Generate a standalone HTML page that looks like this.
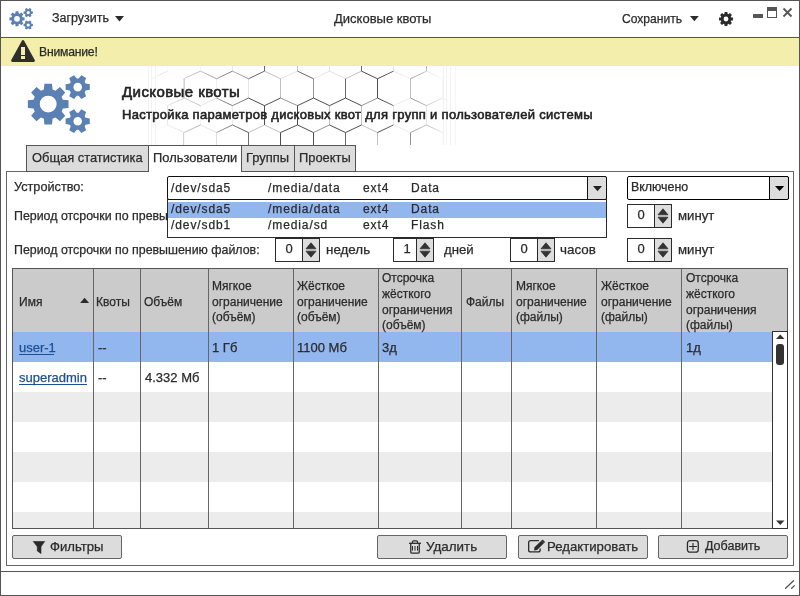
<!DOCTYPE html>
<html><head><meta charset="utf-8">
<style>
*{margin:0;padding:0;box-sizing:border-box}
html,body{width:800px;height:596px;overflow:hidden;background:#fff}
body{position:relative;font-family:"Liberation Sans",sans-serif;font-size:12px;color:#2b2b2b}
.a{position:absolute}
.t{position:absolute;white-space:nowrap;line-height:1;-webkit-font-smoothing:antialiased;will-change:transform;-webkit-text-stroke:0.25px currentColor}
</style></head><body>

<svg class="a" style="left:0;top:0" width="800" height="596">
<defs>
<linearGradient id="hg" x1="140" y1="0" x2="450" y2="0" gradientUnits="userSpaceOnUse">
<stop offset="0" stop-color="#fff" stop-opacity="0"/>
<stop offset="0.2" stop-color="#fff" stop-opacity="0.35"/>
<stop offset="0.36" stop-color="#fff" stop-opacity="1"/>
<stop offset="0.78" stop-color="#fff" stop-opacity="1"/>
<stop offset="0.9" stop-color="#fff" stop-opacity="0.5"/>
<stop offset="1" stop-color="#fff" stop-opacity="0"/>
</linearGradient>
<mask id="hm"><rect x="140" y="66" width="310" height="79" fill="url(#hg)"/></mask>
</defs>
<g mask="url(#hm)" fill="none" stroke="#3a3a3a" stroke-width="0.9"><path d="M70.5 51.85L70.5 71.15" stroke-opacity="0.85"/><path d="M70.5 51.85L87.5 44.25" stroke-opacity="1"/><path d="M70.5 71.15L87.5 78.75" stroke-opacity="1"/><path d="M70.5 105.65L70.5 124.95" stroke-opacity="1"/><path d="M70.5 105.65L87.5 98.05" stroke-opacity="1"/><path d="M70.5 124.95L87.5 132.55" stroke-opacity="0.85"/><path d="M70.5 159.45L70.5 178.75" stroke-opacity="0.85"/><path d="M70.5 159.45L87.5 151.85" stroke-opacity="1"/><path d="M70.5 178.75L87.5 186.35" stroke-opacity="1"/><path d="M87.5 24.95L87.5 44.25" stroke-opacity="1"/><path d="M87.5 24.95L103.5 17.35" stroke-opacity="0.35"/><path d="M87.5 44.25L103.5 51.85" stroke-opacity="0.35"/><path d="M87.5 78.75L87.5 98.05" stroke-opacity="1"/><path d="M87.5 78.75L103.5 71.15" stroke-opacity="1"/><path d="M87.5 98.05L103.5 105.65" stroke-opacity="0.85"/><path d="M87.5 132.55L87.5 151.85" stroke-opacity="1"/><path d="M87.5 132.55L103.5 124.95" stroke-opacity="1"/><path d="M87.5 151.85L103.5 159.45" stroke-opacity="1"/><path d="M87.5 186.35L103.5 178.75" stroke-opacity="0.35"/><path d="M103.5 17.35L119.5 24.95" stroke-opacity="0.15"/><path d="M103.5 51.85L103.5 71.15" stroke-opacity="0.85"/><path d="M103.5 51.85L119.5 44.25" stroke-opacity="0.6"/><path d="M103.5 71.15L119.5 78.75" stroke-opacity="0.35"/><path d="M103.5 105.65L103.5 124.95" stroke-opacity="0.15"/><path d="M103.5 105.65L119.5 98.05" stroke-opacity="1"/><path d="M103.5 124.95L119.5 132.55" stroke-opacity="1"/><path d="M103.5 159.45L103.5 178.75" stroke-opacity="1"/><path d="M103.5 159.45L119.5 151.85" stroke-opacity="1"/><path d="M103.5 178.75L119.5 186.35" stroke-opacity="0.15"/><path d="M119.5 24.95L119.5 44.25" stroke-opacity="1"/><path d="M119.5 24.95L135.5 17.35" stroke-opacity="0.85"/><path d="M119.5 44.25L135.5 51.85" stroke-opacity="0.85"/><path d="M119.5 78.75L119.5 98.05" stroke-opacity="1"/><path d="M119.5 78.75L135.5 71.15" stroke-opacity="1"/><path d="M119.5 98.05L135.5 105.65" stroke-opacity="1"/><path d="M119.5 132.55L119.5 151.85" stroke-opacity="1"/><path d="M119.5 132.55L135.5 124.95" stroke-opacity="0.35"/><path d="M119.5 151.85L135.5 159.45" stroke-opacity="1"/><path d="M119.5 186.35L135.5 178.75" stroke-opacity="0.15"/><path d="M135.5 17.35L151.5 24.95" stroke-opacity="1"/><path d="M135.5 51.85L135.5 71.15" stroke-opacity="1"/><path d="M135.5 51.85L151.5 44.25" stroke-opacity="0.15"/><path d="M135.5 71.15L151.5 78.75" stroke-opacity="0.15"/><path d="M135.5 105.65L135.5 124.95" stroke-opacity="0.15"/><path d="M135.5 105.65L151.5 98.05" stroke-opacity="0.35"/><path d="M135.5 124.95L151.5 132.55" stroke-opacity="0.35"/><path d="M135.5 159.45L135.5 178.75" stroke-opacity="1"/><path d="M135.5 159.45L151.5 151.85" stroke-opacity="0.15"/><path d="M135.5 178.75L151.5 186.35" stroke-opacity="1"/><path d="M151.5 24.95L151.5 44.25" stroke-opacity="0.85"/><path d="M151.5 24.95L167.5 17.35" stroke-opacity="0.6"/><path d="M151.5 44.25L167.5 51.85" stroke-opacity="0.85"/><path d="M151.5 78.75L151.5 98.05" stroke-opacity="1"/><path d="M151.5 78.75L167.5 71.15" stroke-opacity="1"/><path d="M151.5 98.05L167.5 105.65" stroke-opacity="0.35"/><path d="M151.5 132.55L151.5 151.85" stroke-opacity="1"/><path d="M151.5 132.55L167.5 124.95" stroke-opacity="0.35"/><path d="M151.5 151.85L167.5 159.45" stroke-opacity="1"/><path d="M151.5 186.35L167.5 178.75" stroke-opacity="0.6"/><path d="M167.5 17.35L184.5 24.95" stroke-opacity="0.85"/><path d="M167.5 51.85L167.5 71.15" stroke-opacity="0.15"/><path d="M167.5 51.85L184.5 44.25" stroke-opacity="1"/><path d="M167.5 71.15L184.5 78.75" stroke-opacity="0.15"/><path d="M167.5 105.65L167.5 124.95" stroke-opacity="0.85"/><path d="M167.5 105.65L184.5 98.05" stroke-opacity="1"/><path d="M167.5 124.95L184.5 132.55" stroke-opacity="0.6"/><path d="M167.5 159.45L167.5 178.75" stroke-opacity="0.85"/><path d="M167.5 159.45L184.5 151.85" stroke-opacity="1"/><path d="M167.5 178.75L184.5 186.35" stroke-opacity="1"/><path d="M183.5 24.95L183.5 44.25" stroke-opacity="0.15"/><path d="M183.5 24.95L200.5 17.35" stroke-opacity="1"/><path d="M183.5 44.25L200.5 51.85" stroke-opacity="0.6"/><path d="M183.5 78.75L183.5 98.05" stroke-opacity="0.6"/><path d="M183.5 78.75L200.5 71.15" stroke-opacity="1"/><path d="M183.5 98.05L200.5 105.65" stroke-opacity="0.35"/><path d="M183.5 132.55L183.5 151.85" stroke-opacity="1"/><path d="M183.5 132.55L200.5 124.95" stroke-opacity="0.6"/><path d="M183.5 151.85L200.5 159.45" stroke-opacity="0.15"/><path d="M184.5 24.95L184.5 44.25" stroke-opacity="0.15"/><path d="M184.5 44.25L200.5 51.85" stroke-opacity="1"/><path d="M184.5 78.75L184.5 98.05" stroke-opacity="1"/><path d="M184.5 78.75L200.5 71.15" stroke-opacity="0.15"/><path d="M184.5 98.05L200.5 105.65" stroke-opacity="0.85"/><path d="M184.5 132.55L184.5 151.85" stroke-opacity="0.15"/><path d="M184.5 132.55L200.5 124.95" stroke-opacity="1"/><path d="M184.5 151.85L200.5 159.45" stroke-opacity="0.6"/><path d="M184.5 186.35L200.5 178.75" stroke-opacity="0.85"/><path d="M200.5 17.35L216.5 24.95" stroke-opacity="0.15"/><path d="M200.5 51.85L200.5 71.15" stroke-opacity="0.15"/><path d="M200.5 51.85L216.5 44.25" stroke-opacity="1"/><path d="M200.5 71.15L216.5 78.75" stroke-opacity="1"/><path d="M200.5 105.65L200.5 124.95" stroke-opacity="0.15"/><path d="M200.5 105.65L216.5 98.05" stroke-opacity="0.35"/><path d="M200.5 124.95L216.5 132.55" stroke-opacity="0.35"/><path d="M200.5 159.45L200.5 178.75" stroke-opacity="0.15"/><path d="M200.5 159.45L216.5 151.85" stroke-opacity="0.85"/><path d="M200.5 178.75L216.5 186.35" stroke-opacity="0.85"/><path d="M216.5 24.95L216.5 44.25" stroke-opacity="1"/><path d="M216.5 24.95L232.5 17.35" stroke-opacity="0.85"/><path d="M216.5 44.25L232.5 51.85" stroke-opacity="0.85"/><path d="M216.5 78.75L216.5 98.05" stroke-opacity="0.15"/><path d="M216.5 78.75L232.5 71.15" stroke-opacity="1"/><path d="M216.5 98.05L232.5 105.65" stroke-opacity="1"/><path d="M216.5 132.55L216.5 151.85" stroke-opacity="0.35"/><path d="M216.5 132.55L232.5 124.95" stroke-opacity="1"/><path d="M216.5 151.85L232.5 159.45" stroke-opacity="1"/><path d="M216.5 186.35L232.5 178.75" stroke-opacity="0.6"/><path d="M232.5 17.35L248.5 24.95" stroke-opacity="0.6"/><path d="M232.5 51.85L232.5 71.15" stroke-opacity="0.15"/><path d="M232.5 51.85L248.5 44.25" stroke-opacity="0.6"/><path d="M232.5 71.15L248.5 78.75" stroke-opacity="0.6"/><path d="M232.5 105.65L232.5 124.95" stroke-opacity="0.15"/><path d="M232.5 105.65L248.5 98.05" stroke-opacity="0.85"/><path d="M232.5 124.95L248.5 132.55" stroke-opacity="1"/><path d="M232.5 159.45L232.5 178.75" stroke-opacity="0.15"/><path d="M232.5 159.45L248.5 151.85" stroke-opacity="0.35"/><path d="M232.5 178.75L248.5 186.35" stroke-opacity="0.35"/><path d="M248.5 24.95L248.5 44.25" stroke-opacity="1"/><path d="M248.5 24.95L264.5 17.35" stroke-opacity="0.15"/><path d="M248.5 44.25L264.5 51.85" stroke-opacity="0.15"/><path d="M248.5 78.75L248.5 98.05" stroke-opacity="0.15"/><path d="M248.5 78.75L264.5 71.15" stroke-opacity="0.85"/><path d="M248.5 98.05L264.5 105.65" stroke-opacity="1"/><path d="M248.5 132.55L248.5 151.85" stroke-opacity="0.85"/><path d="M248.5 132.55L264.5 124.95" stroke-opacity="0.35"/><path d="M248.5 151.85L264.5 159.45" stroke-opacity="1"/><path d="M248.5 186.35L264.5 178.75" stroke-opacity="1"/><path d="M264.5 17.35L280.5 24.95" stroke-opacity="0.35"/><path d="M264.5 51.85L264.5 71.15" stroke-opacity="0.85"/><path d="M264.5 51.85L280.5 44.25" stroke-opacity="1"/><path d="M264.5 71.15L280.5 78.75" stroke-opacity="0.35"/><path d="M264.5 105.65L264.5 124.95" stroke-opacity="1"/><path d="M264.5 105.65L280.5 98.05" stroke-opacity="1"/><path d="M264.5 124.95L280.5 132.55" stroke-opacity="0.35"/><path d="M264.5 159.45L264.5 178.75" stroke-opacity="0.85"/><path d="M264.5 159.45L280.5 151.85" stroke-opacity="1"/><path d="M264.5 178.75L280.5 186.35" stroke-opacity="0.85"/><path d="M280.5 24.95L280.5 44.25" stroke-opacity="0.15"/><path d="M280.5 24.95L297.5 17.35" stroke-opacity="0.85"/><path d="M280.5 44.25L297.5 51.85" stroke-opacity="0.85"/><path d="M280.5 78.75L280.5 98.05" stroke-opacity="0.35"/><path d="M280.5 78.75L297.5 71.15" stroke-opacity="0.15"/><path d="M280.5 98.05L297.5 105.65" stroke-opacity="0.6"/><path d="M280.5 132.55L280.5 151.85" stroke-opacity="1"/><path d="M280.5 132.55L297.5 124.95" stroke-opacity="1"/><path d="M280.5 151.85L297.5 159.45" stroke-opacity="1"/><path d="M280.5 186.35L297.5 178.75" stroke-opacity="0.6"/><path d="M297.5 17.35L313.5 24.95" stroke-opacity="0.15"/><path d="M297.5 51.85L297.5 71.15" stroke-opacity="0.35"/><path d="M297.5 51.85L313.5 44.25" stroke-opacity="0.35"/><path d="M297.5 71.15L313.5 78.75" stroke-opacity="0.85"/><path d="M297.5 105.65L297.5 124.95" stroke-opacity="1"/><path d="M297.5 105.65L313.5 98.05" stroke-opacity="1"/><path d="M297.5 124.95L313.5 132.55" stroke-opacity="1"/><path d="M297.5 159.45L297.5 178.75" stroke-opacity="1"/><path d="M297.5 159.45L313.5 151.85" stroke-opacity="0.15"/><path d="M297.5 178.75L313.5 186.35" stroke-opacity="0.15"/><path d="M313.5 24.95L313.5 44.25" stroke-opacity="0.35"/><path d="M313.5 24.95L329.5 17.35" stroke-opacity="0.35"/><path d="M313.5 44.25L329.5 51.85" stroke-opacity="0.85"/><path d="M313.5 78.75L313.5 98.05" stroke-opacity="0.6"/><path d="M313.5 78.75L329.5 71.15" stroke-opacity="0.15"/><path d="M313.5 98.05L329.5 105.65" stroke-opacity="1"/><path d="M313.5 132.55L313.5 151.85" stroke-opacity="1"/><path d="M313.5 132.55L329.5 124.95" stroke-opacity="0.6"/><path d="M313.5 151.85L329.5 159.45" stroke-opacity="1"/><path d="M313.5 186.35L329.5 178.75" stroke-opacity="0.6"/><path d="M329.5 17.35L345.5 24.95" stroke-opacity="0.85"/><path d="M329.5 51.85L329.5 71.15" stroke-opacity="0.15"/><path d="M329.5 51.85L345.5 44.25" stroke-opacity="0.15"/><path d="M329.5 71.15L345.5 78.75" stroke-opacity="0.15"/><path d="M329.5 105.65L329.5 124.95" stroke-opacity="0.35"/><path d="M329.5 105.65L345.5 98.05" stroke-opacity="1"/><path d="M329.5 124.95L345.5 132.55" stroke-opacity="1"/><path d="M329.5 159.45L329.5 178.75" stroke-opacity="0.35"/><path d="M329.5 159.45L345.5 151.85" stroke-opacity="0.15"/><path d="M329.5 178.75L345.5 186.35" stroke-opacity="1"/><path d="M345.5 24.95L345.5 44.25" stroke-opacity="0.6"/><path d="M345.5 24.95L361.5 17.35" stroke-opacity="0.6"/><path d="M345.5 44.25L361.5 51.85" stroke-opacity="1"/><path d="M345.5 78.75L345.5 98.05" stroke-opacity="0.85"/><path d="M345.5 78.75L361.5 71.15" stroke-opacity="0.35"/><path d="M345.5 98.05L361.5 105.65" stroke-opacity="1"/><path d="M345.5 132.55L345.5 151.85" stroke-opacity="0.85"/><path d="M345.5 132.55L361.5 124.95" stroke-opacity="1"/><path d="M345.5 151.85L361.5 159.45" stroke-opacity="1"/><path d="M345.5 186.35L361.5 178.75" stroke-opacity="0.35"/><path d="M361.5 17.35L377.5 24.95" stroke-opacity="1"/><path d="M361.5 51.85L361.5 71.15" stroke-opacity="0.85"/><path d="M361.5 51.85L377.5 44.25" stroke-opacity="0.35"/><path d="M361.5 71.15L377.5 78.75" stroke-opacity="1"/><path d="M361.5 105.65L361.5 124.95" stroke-opacity="0.35"/><path d="M361.5 105.65L377.5 98.05" stroke-opacity="0.6"/><path d="M361.5 124.95L377.5 132.55" stroke-opacity="0.35"/><path d="M361.5 159.45L361.5 178.75" stroke-opacity="1"/><path d="M361.5 159.45L377.5 151.85" stroke-opacity="1"/><path d="M361.5 178.75L377.5 186.35" stroke-opacity="0.35"/><path d="M377.5 24.95L377.5 44.25" stroke-opacity="1"/><path d="M377.5 24.95L393.5 17.35" stroke-opacity="0.35"/><path d="M377.5 44.25L393.5 51.85" stroke-opacity="0.35"/><path d="M377.5 78.75L377.5 98.05" stroke-opacity="1"/><path d="M377.5 78.75L393.5 71.15" stroke-opacity="1"/><path d="M377.5 98.05L393.5 105.65" stroke-opacity="1"/><path d="M377.5 132.55L377.5 151.85" stroke-opacity="0.35"/><path d="M377.5 132.55L393.5 124.95" stroke-opacity="1"/><path d="M377.5 151.85L393.5 159.45" stroke-opacity="0.85"/><path d="M377.5 186.35L393.5 178.75" stroke-opacity="0.85"/><path d="M393.5 17.35L410.5 24.95" stroke-opacity="1"/><path d="M393.5 51.85L393.5 71.15" stroke-opacity="0.15"/><path d="M393.5 51.85L410.5 44.25" stroke-opacity="0.85"/><path d="M393.5 71.15L410.5 78.75" stroke-opacity="0.15"/><path d="M393.5 105.65L393.5 124.95" stroke-opacity="0.15"/><path d="M393.5 105.65L410.5 98.05" stroke-opacity="0.15"/><path d="M393.5 124.95L410.5 132.55" stroke-opacity="0.15"/><path d="M393.5 159.45L393.5 178.75" stroke-opacity="1"/><path d="M393.5 159.45L410.5 151.85" stroke-opacity="0.6"/><path d="M393.5 178.75L410.5 186.35" stroke-opacity="0.35"/><path d="M410.5 24.95L410.5 44.25" stroke-opacity="1"/><path d="M410.5 24.95L426.5 17.35" stroke-opacity="1"/><path d="M410.5 44.25L426.5 51.85" stroke-opacity="0.85"/><path d="M410.5 78.75L410.5 98.05" stroke-opacity="0.6"/><path d="M410.5 78.75L426.5 71.15" stroke-opacity="0.85"/><path d="M410.5 98.05L426.5 105.65" stroke-opacity="1"/><path d="M410.5 132.55L410.5 151.85" stroke-opacity="1"/><path d="M410.5 132.55L426.5 124.95" stroke-opacity="0.85"/><path d="M410.5 151.85L426.5 159.45" stroke-opacity="0.6"/><path d="M410.5 186.35L426.5 178.75" stroke-opacity="1"/><path d="M426.5 17.35L442.5 24.95" stroke-opacity="0.35"/><path d="M426.5 51.85L426.5 71.15" stroke-opacity="1"/><path d="M426.5 51.85L442.5 44.25" stroke-opacity="0.15"/><path d="M426.5 71.15L442.5 78.75" stroke-opacity="0.35"/><path d="M426.5 105.65L426.5 124.95" stroke-opacity="0.35"/><path d="M426.5 105.65L442.5 98.05" stroke-opacity="0.85"/><path d="M426.5 124.95L442.5 132.55" stroke-opacity="1"/><path d="M426.5 159.45L426.5 178.75" stroke-opacity="1"/><path d="M426.5 159.45L442.5 151.85" stroke-opacity="1"/><path d="M426.5 178.75L442.5 186.35" stroke-opacity="1"/><path d="M442.5 24.95L442.5 44.25" stroke-opacity="1"/><path d="M442.5 24.95L458.5 17.35" stroke-opacity="0.15"/><path d="M442.5 44.25L458.5 51.85" stroke-opacity="0.6"/><path d="M442.5 78.75L442.5 98.05" stroke-opacity="0.35"/><path d="M442.5 78.75L458.5 71.15" stroke-opacity="0.35"/><path d="M442.5 98.05L458.5 105.65" stroke-opacity="1"/><path d="M442.5 132.55L442.5 151.85" stroke-opacity="0.15"/><path d="M442.5 132.55L458.5 124.95" stroke-opacity="0.15"/><path d="M442.5 151.85L458.5 159.45" stroke-opacity="0.6"/><path d="M442.5 186.35L458.5 178.75" stroke-opacity="0.85"/><path d="M458.5 17.35L474.5 24.95" stroke-opacity="0.85"/><path d="M458.5 51.85L458.5 71.15" stroke-opacity="0.35"/><path d="M458.5 51.85L474.5 44.25" stroke-opacity="0.15"/><path d="M458.5 71.15L474.5 78.75" stroke-opacity="0.15"/><path d="M458.5 105.65L458.5 124.95" stroke-opacity="0.35"/><path d="M458.5 105.65L474.5 98.05" stroke-opacity="0.6"/><path d="M458.5 124.95L474.5 132.55" stroke-opacity="0.6"/><path d="M458.5 159.45L458.5 178.75" stroke-opacity="1"/><path d="M458.5 159.45L474.5 151.85" stroke-opacity="1"/><path d="M458.5 178.75L474.5 186.35" stroke-opacity="0.35"/><path d="M474.5 24.95L474.5 44.25" stroke-opacity="0.15"/><path d="M474.5 24.95L490.5 17.35" stroke-opacity="0.6"/><path d="M474.5 44.25L490.5 51.85" stroke-opacity="0.35"/><path d="M474.5 78.75L474.5 98.05" stroke-opacity="0.85"/><path d="M474.5 78.75L490.5 71.15" stroke-opacity="0.6"/><path d="M474.5 98.05L490.5 105.65" stroke-opacity="1"/><path d="M474.5 132.55L474.5 151.85" stroke-opacity="1"/><path d="M474.5 132.55L490.5 124.95" stroke-opacity="1"/><path d="M474.5 151.85L490.5 159.45" stroke-opacity="1"/><path d="M474.5 186.35L490.5 178.75" stroke-opacity="1"/><path d="M490.5 17.35L506.5 24.95" stroke-opacity="0.35"/><path d="M490.5 51.85L490.5 71.15" stroke-opacity="1"/><path d="M490.5 51.85L506.5 44.25" stroke-opacity="0.15"/><path d="M490.5 51.85L507.5 44.25" stroke-opacity="0.15"/><path d="M490.5 71.15L506.5 78.75" stroke-opacity="0.85"/><path d="M490.5 71.15L507.5 78.75" stroke-opacity="0.6"/><path d="M490.5 105.65L490.5 124.95" stroke-opacity="1"/><path d="M490.5 105.65L506.5 98.05" stroke-opacity="0.6"/><path d="M490.5 105.65L507.5 98.05" stroke-opacity="0.15"/><path d="M490.5 124.95L506.5 132.55" stroke-opacity="0.15"/><path d="M490.5 124.95L507.5 132.55" stroke-opacity="1"/><path d="M490.5 159.45L490.5 178.75" stroke-opacity="1"/><path d="M490.5 159.45L506.5 151.85" stroke-opacity="0.15"/><path d="M490.5 159.45L507.5 151.85" stroke-opacity="0.85"/><path d="M490.5 178.75L507.5 186.35" stroke-opacity="0.15"/><path d="M506.5 24.95L506.5 44.25" stroke-opacity="1"/><path d="M506.5 78.75L506.5 98.05" stroke-opacity="0.6"/><path d="M506.5 132.55L506.5 151.85" stroke-opacity="0.6"/><path d="M507.5 24.95L507.5 44.25" stroke-opacity="0.35"/><path d="M507.5 24.95L523.5 17.35" stroke-opacity="0.15"/><path d="M507.5 44.25L523.5 51.85" stroke-opacity="0.15"/><path d="M507.5 78.75L507.5 98.05" stroke-opacity="0.85"/><path d="M507.5 78.75L523.5 71.15" stroke-opacity="1"/><path d="M507.5 98.05L523.5 105.65" stroke-opacity="0.6"/><path d="M507.5 132.55L507.5 151.85" stroke-opacity="1"/><path d="M507.5 132.55L523.5 124.95" stroke-opacity="0.15"/><path d="M507.5 151.85L523.5 159.45" stroke-opacity="1"/><path d="M507.5 186.35L523.5 178.75" stroke-opacity="1"/><path d="M523.5 17.35L539.5 24.95" stroke-opacity="1"/><path d="M523.5 51.85L523.5 71.15" stroke-opacity="0.35"/><path d="M523.5 51.85L539.5 44.25" stroke-opacity="1"/><path d="M523.5 71.15L539.5 78.75" stroke-opacity="0.6"/><path d="M523.5 105.65L523.5 124.95" stroke-opacity="0.6"/><path d="M523.5 105.65L539.5 98.05" stroke-opacity="0.15"/><path d="M523.5 124.95L539.5 132.55" stroke-opacity="1"/><path d="M523.5 159.45L523.5 178.75" stroke-opacity="0.85"/><path d="M523.5 159.45L539.5 151.85" stroke-opacity="0.15"/><path d="M539.5 24.95L539.5 44.25" stroke-opacity="1"/><path d="M539.5 78.75L539.5 98.05" stroke-opacity="1"/><path d="M539.5 132.55L539.5 151.85" stroke-opacity="0.85"/></g>
</svg>
<div class="a" style="left:443px;top:66px;width:1px;height:79px;background:#f1f1f1"></div>
<div class="a" style="left:446px;top:66px;width:1px;height:79px;background:#f4f4f4"></div>
<div class="a" style="left:450px;top:66px;width:1px;height:79px;background:#f2f2f2"></div>
<div class="a" style="left:455px;top:66px;width:1px;height:79px;background:#f6f6f6"></div>
<div class="a" style="left:148px;top:66px;width:1px;height:79px;background:#f3f3f3"></div>
<div class="a" style="left:151px;top:66px;width:1px;height:79px;background:#f1f1f1"></div>
<div class="a" style="left:155px;top:66px;width:1px;height:79px;background:#f4f4f4"></div>
<div class="a" style="left:0px;top:0px;width:800px;height:596px;border:1px solid #555"></div>
<svg class="a" style="left:0;top:0" width="800" height="596"><path fill="#5a80b4" fill-rule="evenodd" d="M15.38 13.34 L15.59 11.23 L18.41 11.23 L18.62 13.34 L19.72 13.79 L21.35 12.45 L23.35 14.45 L22.01 16.08 L22.46 17.18 L24.57 17.39 L24.57 20.21 L22.46 20.42 L22.01 21.52 L23.35 23.15 L21.35 25.15 L19.72 23.81 L18.62 24.26 L18.41 26.37 L15.59 26.37 L15.38 24.26 L14.28 23.81 L12.65 25.15 L10.65 23.15 L11.99 21.52 L11.54 20.42 L9.43 20.21 L9.43 17.39 L11.54 17.18 L11.99 16.08 L10.65 14.45 L12.65 12.45 L14.28 13.79ZM19.90 18.80A2.9 2.9 0 1 0 14.10 18.80A2.9 2.9 0 1 0 19.90 18.80ZM31.31 11.22 L32.88 11.53 L32.88 13.67 L31.31 13.98 L30.95 14.60 L31.47 16.12 L29.61 17.19 L28.55 15.98 L27.85 15.98 L26.79 17.19 L24.93 16.12 L25.45 14.60 L25.09 13.98 L23.52 13.67 L23.52 11.53 L25.09 11.22 L25.45 10.60 L24.93 9.08 L26.79 8.01 L27.85 9.22 L28.55 9.22 L29.61 8.01 L31.47 9.08 L30.95 10.60ZM29.80 12.60A1.6 1.6 0 1 0 26.60 12.60A1.6 1.6 0 1 0 29.80 12.60ZM31.31 23.62 L32.88 23.93 L32.88 26.07 L31.31 26.38 L30.95 27.00 L31.47 28.52 L29.61 29.59 L28.55 28.38 L27.85 28.38 L26.79 29.59 L24.93 28.52 L25.45 27.00 L25.09 26.38 L23.52 26.07 L23.52 23.93 L25.09 23.62 L25.45 23.00 L24.93 21.48 L26.79 20.41 L27.85 21.62 L28.55 21.62 L29.61 20.41 L31.47 21.48 L30.95 23.00ZM29.80 25.00A1.6 1.6 0 1 0 26.60 25.00A1.6 1.6 0 1 0 29.80 25.00Z"/></svg>
<div class="t" style="left:51.50px;top:12.44px;font-size:12.5px">Загрузить</div>
<svg class="a" style="left:115px;top:16px" width="10" height="6"><path d="M0 0H9L4.5 5.4Z" fill="#2b2b2b"/></svg>
<div class="t" style="left:334.40px;top:11.91px;font-size:13.0px">Дисковые квоты</div>
<div class="t" style="left:622.00px;top:12.78px;font-size:12.1px">Сохранить</div>
<svg class="a" style="left:690px;top:16px" width="10" height="6"><path d="M0 0H8.8L4.4 5.2Z" fill="#2b2b2b"/></svg>
<svg class="a" style="left:0;top:0" width="800" height="596"><path fill="#2b2b2b" fill-rule="evenodd" d="M724.43 13.83 L724.61 12.04 L727.39 12.04 L727.57 13.83 L728.55 14.24 L729.94 13.10 L731.90 15.06 L730.76 16.45 L731.17 17.43 L732.96 17.61 L732.96 20.39 L731.17 20.57 L730.76 21.55 L731.90 22.94 L729.94 24.90 L728.55 23.76 L727.57 24.17 L727.39 25.96 L724.61 25.96 L724.43 24.17 L723.45 23.76 L722.06 24.90 L720.10 22.94 L721.24 21.55 L720.83 20.57 L719.04 20.39 L719.04 17.61 L720.83 17.43 L721.24 16.45 L720.10 15.06 L722.06 13.10 L723.45 14.24ZM728.40 19.00A2.4 2.4 0 1 0 723.60 19.00A2.4 2.4 0 1 0 728.40 19.00Z"/></svg>
<div class="a" style="left:753px;top:14px;width:10px;height:4px;background:#555"></div>
<div class="a" style="left:767px;top:7px;width:10px;height:11px;border:1px solid #555;border-top-width:4px"></div>
<svg class="a" style="left:782px;top:7px" width="12" height="12"><path d="M1.5 1.5L9.5 9.5M9.5 1.5L1.5 9.5" stroke="#555" stroke-width="1.8"/></svg>
<div class="a" style="left:1px;top:37px;width:798px;height:1px;background:#555"></div>
<div class="a" style="left:1px;top:38px;width:798px;height:28px;background:#f3eeab"></div>
<svg class="a" style="left:11px;top:40px" width="24" height="22" viewBox="0 0 24 22">
<path d="M12 1.4 L22.6 20.6 H1.4 Z" fill="#2e2e2e" stroke="#2e2e2e" stroke-width="2.6" stroke-linejoin="round"/>
<rect x="10" y="7" width="4" height="8" fill="#f3eeab"/>
<rect x="10" y="16" width="4" height="3" fill="#f3eeab"/>
</svg>
<div class="t" style="left:38.90px;top:45.69px;font-size:12.2px;letter-spacing:-0.22px">Внимание!</div>
<svg class="a" style="left:0;top:0" width="800" height="596"><path fill="#5a80b4" fill-rule="evenodd" d="M43.84 89.43 L44.40 83.75 L52.00 83.75 L52.56 89.43 L55.49 90.65 L59.90 87.03 L65.27 92.40 L61.65 96.81 L62.87 99.74 L68.55 100.30 L68.55 107.90 L62.87 108.46 L61.65 111.39 L65.27 115.80 L59.90 121.17 L55.49 117.55 L52.56 118.77 L52.00 124.45 L44.40 124.45 L43.84 118.77 L40.91 117.55 L36.50 121.17 L31.13 115.80 L34.75 111.39 L33.53 108.46 L27.85 107.90 L27.85 100.30 L33.53 99.74 L34.75 96.81 L31.13 92.40 L36.50 87.03 L40.91 90.65ZM56.65 104.10A8.45 8.45 0 1 0 39.75 104.10A8.45 8.45 0 1 0 56.65 104.10ZM85.56 83.60 L89.79 84.33 L89.79 89.87 L85.56 90.60 L84.66 92.15 L86.14 96.18 L81.35 98.95 L78.60 95.65 L76.80 95.65 L74.05 98.95 L69.26 96.18 L70.74 92.15 L69.84 90.60 L65.61 89.87 L65.61 84.33 L69.84 83.60 L70.74 82.05 L69.26 78.02 L74.05 75.25 L76.80 78.55 L78.60 78.55 L81.35 75.25 L86.14 78.02 L84.66 82.05ZM82.00 87.10A4.3 4.3 0 1 0 73.40 87.10A4.3 4.3 0 1 0 82.00 87.10ZM85.56 117.70 L89.79 118.43 L89.79 123.97 L85.56 124.70 L84.66 126.25 L86.14 130.28 L81.35 133.05 L78.60 129.75 L76.80 129.75 L74.05 133.05 L69.26 130.28 L70.74 126.25 L69.84 124.70 L65.61 123.97 L65.61 118.43 L69.84 117.70 L70.74 116.15 L69.26 112.12 L74.05 109.35 L76.80 112.65 L78.60 112.65 L81.35 109.35 L86.14 112.12 L84.66 116.15ZM82.00 121.20A4.3 4.3 0 1 0 73.40 121.20A4.3 4.3 0 1 0 82.00 121.20Z"/></svg>
<div class="t" style="left:121.80px;top:83.53px;font-size:15px;letter-spacing:0.42px;color:#222;-webkit-text-stroke:0.6px #222">Дисковые квоты</div>
<div class="t" style="left:121.80px;top:107.61px;font-size:13px;letter-spacing:0.3px;color:#222;-webkit-text-stroke:0.55px #222">Настройка параметров дисковых квот для групп и пользователей системы</div>
<div class="a" style="left:6px;top:171px;width:788px;height:395px;border:1px solid #666"></div>
<div class="a" style="left:26px;top:145px;width:123px;height:27px;background:#dcdcdc;border:1px solid #555"></div>
<div class="a" style="left:241px;top:145px;width:54px;height:27px;background:#dcdcdc;border:1px solid #555"></div>
<div class="a" style="left:294px;top:145px;width:62px;height:27px;background:#dcdcdc;border:1px solid #555"></div>
<div class="a" style="left:148px;top:145px;width:94px;height:27px;background:#fff;border:1px solid #555;border-bottom:none"></div>
<div class="t" style="left:32.00px;top:151.50px;font-size:12.9px">Общая статистика</div>
<div class="t" style="left:153.00px;top:151.50px;font-size:12.9px">Пользователи</div>
<div class="t" style="left:246.20px;top:151.50px;font-size:12.9px">Группы</div>
<div class="t" style="left:299.00px;top:151.50px;font-size:12.9px">Проекты</div>
<div class="t" style="left:14.20px;top:181.07px;font-size:12.7px">Устройство:</div>
<div class="t" style="left:14.40px;top:209.72px;font-size:12.4px">Период отсрочки по превышению блоков:</div>
<div class="t" style="left:14.40px;top:243.72px;font-size:12.4px">Период отсрочки по превышению файлов:</div>
<div class="a" style="left:275px;top:204px;width:45px;height:24px;border:1px solid #2b2b2b;background:#fff"></div>
<div class="a" style="left:302px;top:204px;width:18px;height:24px;border:1px solid #2b2b2b;background:#ddd"></div>
<svg class="a" style="left:305.0px;top:208.0px" width="12" height="16" viewBox="0 0 12 16"><path d="M6 0.8L11 6.8H1Z M1 9.2H11L6 15.2Z" fill="#333" stroke="#333" stroke-width="0.8" stroke-linejoin="round"/></svg>
<div class="t" style="left:288.50px;top:208.01px;font-size:13px;transform:translateX(-50%)">0</div>
<div class="a" style="left:393px;top:204px;width:41px;height:24px;border:1px solid #2b2b2b;background:#fff"></div>
<div class="a" style="left:416px;top:204px;width:18px;height:24px;border:1px solid #2b2b2b;background:#ddd"></div>
<svg class="a" style="left:419.0px;top:208.0px" width="12" height="16" viewBox="0 0 12 16"><path d="M6 0.8L11 6.8H1Z M1 9.2H11L6 15.2Z" fill="#333" stroke="#333" stroke-width="0.8" stroke-linejoin="round"/></svg>
<div class="t" style="left:404.50px;top:208.01px;font-size:13px;transform:translateX(-50%)">0</div>
<div class="a" style="left:510px;top:204px;width:45px;height:24px;border:1px solid #2b2b2b;background:#fff"></div>
<div class="a" style="left:537px;top:204px;width:18px;height:24px;border:1px solid #2b2b2b;background:#ddd"></div>
<svg class="a" style="left:540.0px;top:208.0px" width="12" height="16" viewBox="0 0 12 16"><path d="M6 0.8L11 6.8H1Z M1 9.2H11L6 15.2Z" fill="#333" stroke="#333" stroke-width="0.8" stroke-linejoin="round"/></svg>
<div class="t" style="left:523.50px;top:208.01px;font-size:13px;transform:translateX(-50%)">0</div>
<div class="a" style="left:627px;top:204px;width:45px;height:24px;border:1px solid #2b2b2b;background:#fff"></div>
<div class="a" style="left:654px;top:204px;width:18px;height:24px;border:1px solid #2b2b2b;background:#ddd"></div>
<svg class="a" style="left:657.0px;top:208.0px" width="12" height="16" viewBox="0 0 12 16"><path d="M6 0.8L11 6.8H1Z M1 9.2H11L6 15.2Z" fill="#333" stroke="#333" stroke-width="0.8" stroke-linejoin="round"/></svg>
<div class="t" style="left:640.50px;top:208.01px;font-size:13px;transform:translateX(-50%)">0</div>
<div class="t" style="left:678.00px;top:208.65px;font-size:13.2px">минут</div>
<div class="a" style="left:275px;top:238px;width:45px;height:24px;border:1px solid #2b2b2b;background:#fff"></div>
<div class="a" style="left:302px;top:238px;width:18px;height:24px;border:1px solid #2b2b2b;background:#ddd"></div>
<svg class="a" style="left:305.0px;top:242.0px" width="12" height="16" viewBox="0 0 12 16"><path d="M6 0.8L11 6.8H1Z M1 9.2H11L6 15.2Z" fill="#333" stroke="#333" stroke-width="0.8" stroke-linejoin="round"/></svg>
<div class="t" style="left:288.50px;top:242.01px;font-size:13px;transform:translateX(-50%)">0</div>
<div class="a" style="left:393px;top:238px;width:41px;height:24px;border:1px solid #2b2b2b;background:#fff"></div>
<div class="a" style="left:416px;top:238px;width:18px;height:24px;border:1px solid #2b2b2b;background:#ddd"></div>
<svg class="a" style="left:419.0px;top:242.0px" width="12" height="16" viewBox="0 0 12 16"><path d="M6 0.8L11 6.8H1Z M1 9.2H11L6 15.2Z" fill="#333" stroke="#333" stroke-width="0.8" stroke-linejoin="round"/></svg>
<div class="t" style="left:406.50px;top:242.01px;font-size:13px;transform:translateX(-50%)">1</div>
<div class="a" style="left:510px;top:238px;width:45px;height:24px;border:1px solid #2b2b2b;background:#fff"></div>
<div class="a" style="left:537px;top:238px;width:18px;height:24px;border:1px solid #2b2b2b;background:#ddd"></div>
<svg class="a" style="left:540.0px;top:242.0px" width="12" height="16" viewBox="0 0 12 16"><path d="M6 0.8L11 6.8H1Z M1 9.2H11L6 15.2Z" fill="#333" stroke="#333" stroke-width="0.8" stroke-linejoin="round"/></svg>
<div class="t" style="left:523.50px;top:242.01px;font-size:13px;transform:translateX(-50%)">0</div>
<div class="a" style="left:627px;top:238px;width:45px;height:24px;border:1px solid #2b2b2b;background:#fff"></div>
<div class="a" style="left:654px;top:238px;width:18px;height:24px;border:1px solid #2b2b2b;background:#ddd"></div>
<svg class="a" style="left:657.0px;top:242.0px" width="12" height="16" viewBox="0 0 12 16"><path d="M6 0.8L11 6.8H1Z M1 9.2H11L6 15.2Z" fill="#333" stroke="#333" stroke-width="0.8" stroke-linejoin="round"/></svg>
<div class="t" style="left:640.50px;top:242.01px;font-size:13px;transform:translateX(-50%)">0</div>
<div class="t" style="left:325.50px;top:242.88px;font-size:13.4px">недель</div>
<div class="t" style="left:444.40px;top:243.05px;font-size:13.2px">дней</div>
<div class="t" style="left:560.30px;top:242.88px;font-size:13.4px">часов</div>
<div class="t" style="left:678.00px;top:243.05px;font-size:13.2px">минут</div>
<div class="a" style="left:627px;top:176px;width:162px;height:24px;border:1px solid #000;border-radius:2px;background:#fff"></div>
<div class="a" style="left:769px;top:176px;width:20px;height:24px;border:1px solid #000;border-radius:0 2px 2px 0;background:#ddd"></div>
<svg class="a" style="left:775px;top:186px" width="10" height="6"><path d="M0 0H9.2L4.6 5Z" fill="#000"/></svg>
<div class="t" style="left:630.80px;top:181.32px;font-size:12.4px">Включено</div>
<div class="a" style="left:167px;top:199px;width:440px;height:39px;border:1px solid #2b2b2b;background:#fff"></div>
<div class="a" style="left:168px;top:202px;width:438px;height:16px;background:#92b6ee"></div>
<div class="a" style="left:167px;top:176px;width:440px;height:24px;border:1px solid #111;border-radius:2px;background:#fff"></div>
<div class="a" style="left:587px;top:176px;width:20px;height:24px;border:1px solid #111;border-radius:0 2px 2px 0;background:#ddd"></div>
<svg class="a" style="left:593px;top:186px" width="10" height="6"><path d="M0 0H9L4.5 5.2Z" fill="#222"/></svg>
<div class="t" style="left:171.40px;top:181.76px;font-size:12px;letter-spacing:0.9px">/dev/sda5</div>
<div class="t" style="left:267.50px;top:181.76px;font-size:12px;letter-spacing:0.9px">/media/data</div>
<div class="t" style="left:363.00px;top:181.76px;font-size:12px;letter-spacing:0.9px">ext4</div>
<div class="t" style="left:411.25px;top:181.76px;font-size:12px;letter-spacing:0.9px">Data</div>
<div class="t" style="left:171.40px;top:203.26px;font-size:12px;letter-spacing:0.9px">/dev/sda5</div>
<div class="t" style="left:267.50px;top:203.26px;font-size:12px;letter-spacing:0.9px">/media/data</div>
<div class="t" style="left:363.00px;top:203.26px;font-size:12px;letter-spacing:0.9px">ext4</div>
<div class="t" style="left:411.25px;top:203.26px;font-size:12px;letter-spacing:0.9px">Data</div>
<div class="t" style="left:171.40px;top:219.36px;font-size:12px;letter-spacing:0.9px">/dev/sdb1</div>
<div class="t" style="left:267.50px;top:219.36px;font-size:12px;letter-spacing:0.9px">/media/sd</div>
<div class="t" style="left:363.00px;top:219.36px;font-size:12px;letter-spacing:0.9px">ext4</div>
<div class="t" style="left:411.25px;top:219.36px;font-size:12px;letter-spacing:0.9px">Flash</div>
<div class="a" style="left:12px;top:268px;width:776px;height:261px;border:1px solid #555;background:#fff"></div>
<div class="a" style="left:13px;top:269px;width:774px;height:63px;background:#cbcbcb"></div>
<div class="a" style="left:13px;top:332px;width:774px;height:30px;background:#92b6ee"></div>
<div class="a" style="left:13px;top:392px;width:774px;height:30px;background:#ececec"></div>
<div class="a" style="left:13px;top:452px;width:774px;height:30px;background:#ececec"></div>
<div class="a" style="left:13px;top:512px;width:774px;height:16px;background:#ececec"></div>
<div class="a" style="left:93px;top:269px;width:1px;height:259px;background:#666"></div>
<div class="a" style="left:140px;top:269px;width:1px;height:259px;background:#666"></div>
<div class="a" style="left:208px;top:269px;width:1px;height:259px;background:#666"></div>
<div class="a" style="left:293px;top:269px;width:1px;height:259px;background:#666"></div>
<div class="a" style="left:378px;top:269px;width:1px;height:259px;background:#666"></div>
<div class="a" style="left:461px;top:269px;width:1px;height:259px;background:#666"></div>
<div class="a" style="left:511px;top:269px;width:1px;height:259px;background:#666"></div>
<div class="a" style="left:596px;top:269px;width:1px;height:259px;background:#666"></div>
<div class="a" style="left:681px;top:269px;width:1px;height:259px;background:#666"></div>
<div class="a" style="left:772px;top:331px;width:16px;height:198px;border:1px solid #333;background:#fff"></div>
<svg class="a" style="left:776px;top:334px" width="9" height="6"><path d="M0 5H8.5L4.25 0.5Z" fill="#333"/></svg>
<div class="a" style="left:776px;top:344px;width:8px;height:21px;background:#333;border-radius:3px"></div>
<svg class="a" style="left:776px;top:520px" width="9" height="6"><path d="M0 0.5H8.5L4.25 5Z" fill="#333"/></svg>
<div class="t" style="left:19.40px;top:295.66px;font-size:12px">Имя</div>
<svg class="a" style="left:80px;top:297px" width="10" height="7"><path d="M0.1 6H9.1L4.6 0.8Z" fill="#2b2b2b"/></svg>
<div class="t" style="left:96.20px;top:295.66px;font-size:12px">Квоты</div>
<div class="t" style="left:144.10px;top:295.66px;font-size:12px">Объём</div>
<div class="t" style="left:212.00px;top:279.96px;font-size:12px">Мягкое</div>
<div class="t" style="left:212.00px;top:295.66px;font-size:12px">ограничение</div>
<div class="t" style="left:212.00px;top:311.36px;font-size:12px">(объём)</div>
<div class="t" style="left:297.00px;top:279.96px;font-size:12px">Жёсткое</div>
<div class="t" style="left:297.00px;top:295.66px;font-size:12px">ограничение</div>
<div class="t" style="left:297.00px;top:311.36px;font-size:12px">(объём)</div>
<div class="t" style="left:382.30px;top:272.11px;font-size:12px">Отсрочка</div>
<div class="t" style="left:382.30px;top:287.81px;font-size:12px">жёсткого</div>
<div class="t" style="left:382.30px;top:303.51px;font-size:12px">ограничения</div>
<div class="t" style="left:382.30px;top:319.21px;font-size:12px">(объём)</div>
<div class="t" style="left:465.50px;top:295.66px;font-size:12px">Файлы</div>
<div class="t" style="left:515.50px;top:279.96px;font-size:12px">Мягкое</div>
<div class="t" style="left:515.50px;top:295.66px;font-size:12px">ограничение</div>
<div class="t" style="left:515.50px;top:311.36px;font-size:12px">(файлы)</div>
<div class="t" style="left:600.50px;top:279.96px;font-size:12px">Жёсткое</div>
<div class="t" style="left:600.50px;top:295.66px;font-size:12px">ограничение</div>
<div class="t" style="left:600.50px;top:311.36px;font-size:12px">(файлы)</div>
<div class="t" style="left:685.70px;top:272.11px;font-size:12px">Отсрочка</div>
<div class="t" style="left:685.70px;top:287.81px;font-size:12px">жёсткого</div>
<div class="t" style="left:685.70px;top:303.51px;font-size:12px">ограничения</div>
<div class="t" style="left:685.70px;top:319.21px;font-size:12px">(файлы)</div>
<div class="t" style="left:19.20px;top:340.81px;font-size:13px;color:#1d4f94">user-1</div>
<div class="a" style="left:19px;top:354px;width:35px;height:1px;background:#1d4f94"></div>
<div class="t" style="left:97.60px;top:340.81px;font-size:13px">--</div>
<div class="t" style="left:212.00px;top:340.81px;font-size:13px">1 Гб</div>
<div class="t" style="left:297.00px;top:340.81px;font-size:13px">1100 Мб</div>
<div class="t" style="left:382.30px;top:340.81px;font-size:13px">3д</div>
<div class="t" style="left:685.70px;top:340.81px;font-size:13px">1д</div>
<div class="t" style="left:19.20px;top:370.81px;font-size:13px;color:#1d4f94">superadmin</div>
<div class="a" style="left:19px;top:384px;width:68px;height:1px;background:#1d4f94"></div>
<div class="t" style="left:97.60px;top:370.81px;font-size:13px">--</div>
<div class="t" style="left:145.00px;top:370.81px;font-size:13px">4.332 Мб</div>
<div class="a" style="left:12px;top:535px;width:110px;height:24px;background:#dcdcdc;border:1px solid #666;border-radius:2px"></div>
<svg class="a" style="left:32px;top:541px" width="14" height="14" viewBox="0 0 14 14"><path d="M1 0.3H12.9L9.1 5.8V12.7L5.2 10V5.8Z" fill="#2b2b2b" stroke="#2b2b2b" stroke-width="0.4" stroke-linejoin="round"/></svg>
<div class="t" style="left:49.80px;top:539.83px;font-size:13.1px">Фильтры</div>
<div class="a" style="left:377px;top:535px;width:130px;height:24px;background:#dcdcdc;border:1px solid #666;border-radius:2px"></div>
<svg class="a" style="left:408px;top:540px" width="14" height="15" viewBox="0 0 14 15"><g fill="none" stroke="#2b2b2b"><path d="M1 3.3H13" stroke-width="1.3"/><path d="M4.4 3.3V2.2Q4.4 0.9 5.7 0.9H8.3Q9.6 0.9 9.6 2.2V3.3" stroke-width="1.2"/><path d="M2.75 3.3V11.9Q2.75 13.1 3.95 13.1H10.05Q11.25 13.1 11.25 11.9V3.3" stroke-width="1.3"/><path d="M4.5 6V10.6M7 6V10.6M9.5 6V10.6" stroke-width="1"/></g></svg>
<div class="t" style="left:425.80px;top:539.58px;font-size:13.4px">Удалить</div>
<div class="a" style="left:518px;top:535px;width:130px;height:24px;background:#dcdcdc;border:1px solid #666;border-radius:2px"></div>
<svg class="a" style="left:527px;top:539px" width="20" height="16" viewBox="0 0 20 16"><path d="M11.9 1.65H3.6Q1.65 1.65 1.65 3.6V11Q1.65 12.95 3.6 12.95H11.2Q13.15 12.95 13.15 11V9.4" fill="none" stroke="#2b2b2b" stroke-width="1.3"/><path d="M7 11.4L7.51 8.36L15.53 0.42L18.07 2.98L10.05 10.92Z" fill="#2b2b2b"/><path d="M14.3 1.65L16.85 4.2" stroke="#888" stroke-width="0.5"/></svg>
<div class="t" style="left:546.60px;top:539.75px;font-size:13.2px">Редактировать</div>
<div class="a" style="left:658px;top:535px;width:130px;height:24px;background:#dcdcdc;border:1px solid #666;border-radius:2px"></div>
<svg class="a" style="left:686px;top:539px" width="14" height="15" viewBox="0 0 14 15"><rect x="1.45" y="1.65" width="10.8" height="11.5" rx="2.5" fill="none" stroke="#2b2b2b" stroke-width="1.3"/><path d="M7 3.9V11.1M3.1 7.5H10.9" stroke="#2b2b2b" stroke-width="1.1"/></svg>
<div class="t" style="left:704.60px;top:540.34px;font-size:12.5px">Добавить</div>
<div class="a" style="left:1px;top:571px;width:798px;height:1px;background:#555"></div>
<svg class="a" style="left:784px;top:580px" width="12" height="10"><path d="M1.6 8.2L9.5 0.7M7.7 8.2L10.4 5.6" stroke="#555" stroke-width="1.3" stroke-linecap="round"/></svg>
</body></html>
